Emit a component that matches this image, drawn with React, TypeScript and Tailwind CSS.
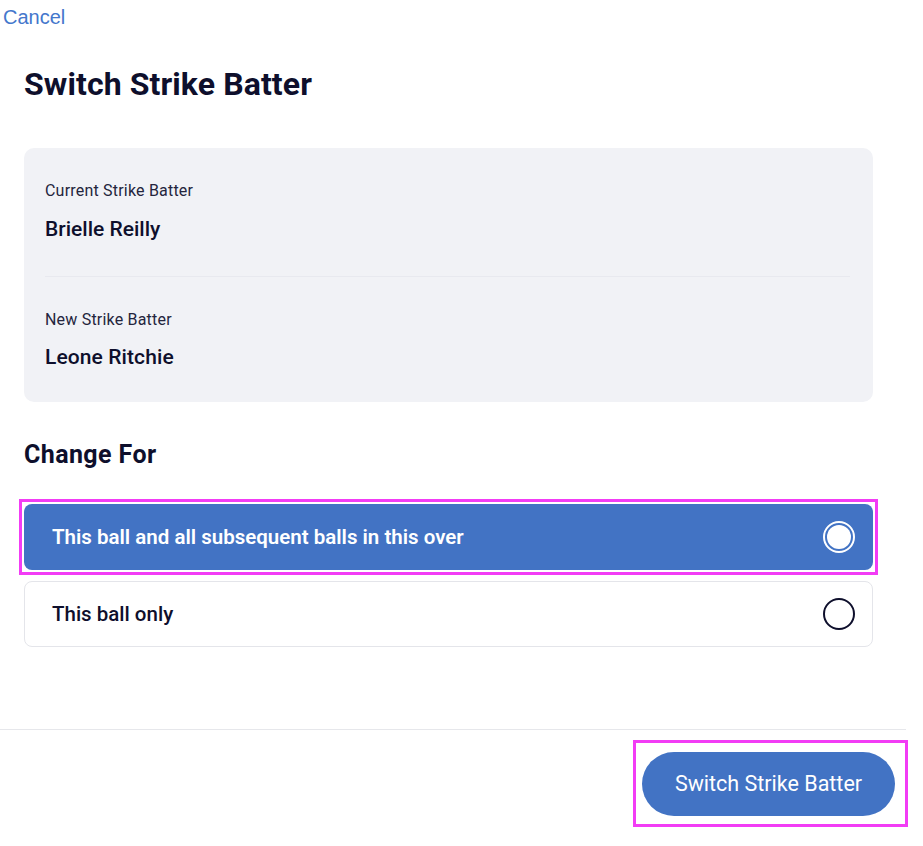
import React, { useState } from 'react';

type Scope = 'over' | 'ball';

const OPTIONS: { id: Scope; label: string }[] = [
  { id: 'over', label: 'This ball and all subsequent balls in this over' },
  { id: 'ball', label: 'This ball only' },
];

const font = "font-['Roboto','Noto_Sans',sans-serif]";

export default function App() {
  const [scope, setScope] = useState<Scope>('over');

  return (
    <div className={`min-h-[846px] w-[923px] bg-white text-[#0e0f2c] ${font} flex flex-col`}>
      {/* Header */}
      <a href="#" className="ml-[3px] mt-[4px] text-[20px] leading-[26px] text-[#4477cc] font-['Liberation_Sans',Arial,sans-serif] self-start">
        Cancel
      </a>

      <main className="pl-6 pr-[50px] flex flex-col">
        <h1 className="mt-[36px] text-[32px] leading-[36px] font-bold tracking-[0.1px]">Switch Strike Batter</h1>

        {/* Batter summary */}
        <section className="mt-[46px] rounded-[10px] bg-[#f1f2f6] px-[21px] pt-[34px] pb-[34px]">
          <div className="pb-[36px]">
            <p className="text-[16px] leading-[18px] tracking-[0.2px] text-[#24253d]">Current Strike Batter</p>
            <p className="mt-[18px] text-[21px] leading-[22px] font-medium">Brielle Reilly</p>
          </div>
          <div className="h-px bg-[#e8e9ef] mr-[2px]" />
          <div className="pt-[34px]">
            <p className="text-[16px] leading-[18px] tracking-[0.2px] text-[#24253d]">New Strike Batter</p>
            <p className="mt-[17px] text-[21px] leading-[22px] font-medium tracking-[0.1px]">Leone Ritchie</p>
          </div>
        </section>

        <h2 className="mt-[39px] text-[25px] leading-[28px] font-bold tracking-[0.4px]">Change For</h2>

        {/* Options */}
        <div className="mt-[36px] flex flex-col gap-3">
          {OPTIONS.map((opt) => {
            const active = scope === opt.id;
            return (
              <div
                key={opt.id}
                className={active ? 'relative -mx-[5px] -my-[6px] border-[3px] border-[#f23cf5] p-[2px]' : ''}
              >
                <button
                  onClick={() => setScope(opt.id)}
                  className={
                    active
                      ? 'w-full h-[66px] flex items-center justify-between rounded-[8px] bg-[#4273c4] pl-[28px] pr-[18px] text-white'
                      : 'w-full h-[66px] flex items-center justify-between rounded-[8px] bg-white border border-[#e4e5ea] pl-[27px] pr-[17px] text-[#0e0f2c]'
                  }
                >
                  <span className={active ? 'text-[20.5px] font-semibold' : 'text-[20.5px] font-medium'}>{opt.label}</span>
                  {active ? (
                    <span className="w-[32px] h-[32px] rounded-full border-2 border-white flex items-center justify-center">
                      <span className="w-[24px] h-[24px] rounded-full bg-white" />
                    </span>
                  ) : (
                    <span className="w-[32px] h-[32px] rounded-full border-2 border-[#0e0f2c]" />
                  )}
                </button>
              </div>
            );
          })}
        </div>
      </main>

      {/* Footer */}
      <footer className="mt-[82px] mr-[17px] border-t border-[#e6e7eb] flex justify-end">
        <div className="mt-[10px] -mr-[2px] border-[3px] border-[#f23cf5] pl-[6px] pr-[10px] pt-[9px] pb-[8px]">
          <button className="h-[64px] w-[253px] rounded-full bg-[#4273c4] text-white text-[21.5px]">
            Switch Strike Batter
          </button>
        </div>
      </footer>
    </div>
  );
}
